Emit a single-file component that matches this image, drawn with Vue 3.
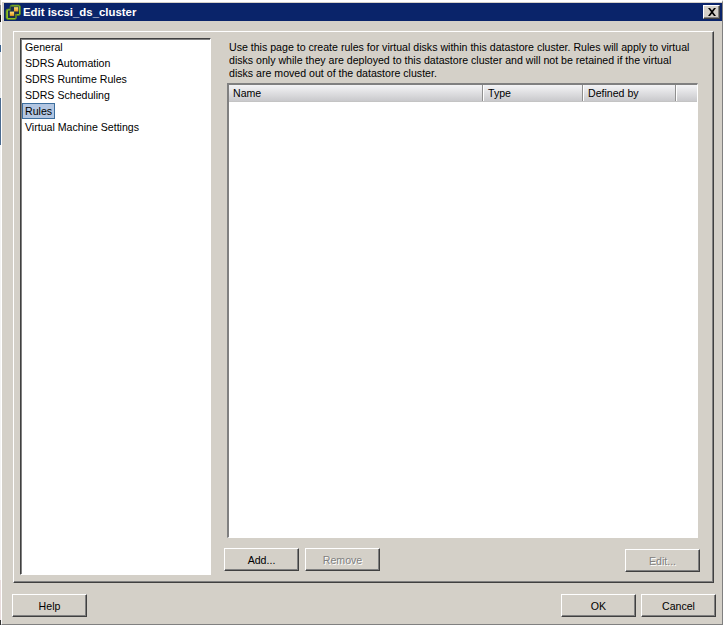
<script setup>
const items = ['General', 'SDRS Automation', 'SDRS Runtime Rules', 'SDRS Scheduling', 'Rules', 'Virtual Machine Settings']
const columns = [
  { label: 'Name', width: 254 },
  { label: 'Type', width: 100 },
  { label: 'Defined by', width: 93 },
  { label: '', width: 21 },
]
</script>

<template>
  <div class="page">
    <div class="desktop-strip"></div>
    <div class="window">
      <div class="titlebar">
        <svg class="app-icon" width="16" height="16" viewBox="0 0 16 16">
          <defs>
            <linearGradient id="amber" x1="0" y1="0" x2="0" y2="1">
              <stop offset="0" stop-color="#fbe27a"/>
              <stop offset="1" stop-color="#e8951c"/>
            </linearGradient>
          </defs>
          <rect x="5" y="1" width="10.500" height="10.500" rx="2" fill="#8cbf26" stroke="#55801c" stroke-width="0.8"/>
          <rect x="1" y="5" width="10.500" height="10.500" rx="2" fill="#8cbf26" stroke="#55801c" stroke-width="0.8"/>
          <rect x="5.500" y="2.500" width="8.500" height="7.500" fill="#1b2f4a"/>
          <rect x="3" y="6.500" width="7.500" height="7.500" fill="#1b2f4a"/>
          <rect x="9" y="3.200" width="4.300" height="4.300" fill="url(#amber)"/>
          <rect x="4.800" y="7.600" width="4.300" height="4.300" fill="url(#amber)"/>
        </svg>
        <span class="title">Edit iscsi_ds_cluster</span>
        <span class="close">
          <svg width="10" height="8" viewBox="0 0 10 8">
            <path d="M1 0h2l2 2.500L7 0h2L6 4l3 4H7L5 5.500 3 8H1l3-4z" fill="#000"/>
          </svg>
        </span>
      </div>

      <div class="panel">
        <ul class="nav">
          <li v-for="item in items" :key="item" class="nav-item">
            <span :class="['nav-label', { selected: item === 'Rules' }]">{{ item }}</span>
          </li>
        </ul>

        <div class="content">
          <p class="intro">Use this page to create rules for virtual disks within this datastore cluster. Rules will apply to virtual disks only while they are deployed to this datastore cluster and will not be retained if the virtual disks are moved out of the datastore cluster.</p>
          <div class="table">
            <div class="thead">
              <div v-for="c in columns" :key="c.width" class="th" :style="{ width: c.width + 'px' }">{{ c.label }}</div>
            </div>
          </div>
          <div class="actions">
            <button class="btn">Add...</button>
            <button class="btn" disabled>Remove</button>
            <button class="btn edit" disabled>Edit...</button>
          </div>
        </div>
      </div>

      <div class="footer">
        <button class="btn">Help</button>
        <div class="footer-right">
          <button class="btn">OK</button>
          <button class="btn">Cancel</button>
        </div>
      </div>
    </div>
  </div>
</template>

<style>
html, body { margin: 0; background: #fff; overflow: hidden; }
</style>

<style scoped>
.page {
  width: 723px;
  height: 625px;
  display: flex;
  font: 10.6px "Liberation Sans", Arial, sans-serif;
  color: #000;
}
.desktop-strip {
  width: 1px;
  background: linear-gradient(#d4d0c8 0 5px, #888 5px 15px, #111 15px 22px, #e8e8e8 22px 45px, #39608c 45px 52px, #e8e8e8 52px 98px, #4a6a8f 98px 145px, #f4f4f4 145px 580px, #e8dcdc 580px 620px, #333 620px);
}
.window {
  flex: 1;
  display: flex;
  flex-direction: column;
  box-sizing: border-box;
  border-left: 1px solid #fff;
  border-top: 2px solid #fff;
  border-right: 1px solid #808080;
  border-bottom: 1px solid #808080;
  background: #d4d0c8;
  padding: 1px 0 0 1px;
}
.titlebar {
  height: 18px;
  margin-left: 1px;
  background: #0a246a;
  display: flex;
  align-items: center;
  padding: 0 2px 0 1px;
  flex: none;
}
.app-icon { flex: none; }
.title {
  margin-left: 2px;
  color: #fff;
  font-weight: bold;
  font-size: 11.4px;
  flex: 1;
}
.close {
  width: 17px;
  height: 14px;
  box-sizing: border-box;
  background: #d4d0c8;
  border: 1px solid;
  border-color: #fff #404040 #404040 #fff;
  box-shadow: inset -1px -1px 0 #808080;
  display: flex;
  align-items: center;
  justify-content: center;
}
.panel {
  flex: none;
  width: 701px;
  height: 552px;
  margin: 10px 0 0 10px;
  box-sizing: border-box;
  border: 1px solid;
  border-color: #fff #404040 #404040 #fff;
  box-shadow: inset -1px -1px 0 #808080;
  padding: 6px 0 0 6px;
  display: flex;
}
.nav {
  list-style: none;
  margin: 0;
  padding: 0;
  width: 191px;
  height: 537px;
  box-sizing: border-box;
  border: 1px solid;
  border-color: #404040 #fff #fff #404040;
  box-shadow: inset 0 1px 0 #808080, inset 1px 0 0 #808080;
  background: #fff;
  flex: none;
}
.nav-item { height: 16px; padding-left: 1px; display: flex; }
.nav-label {
  padding: 0 2px;
  height: 16px;
  box-sizing: border-box;
  border: 1px solid transparent;
  line-height: 14px;
}
.nav-label.selected { background: #b2c6e2; border-color: #3c6e9e; }
.content {
  margin-left: 13px;
  width: 476px;
  display: flex;
  flex-direction: column;
}
.intro {
  margin: 3px 0 0 5px;
  line-height: 13px;
  height: 39px;
  width: 465px;
}
.table {
  margin: 3px 0 0 3px;
  width: 471px;
  height: 455px;
  box-sizing: border-box;
  border: 2px solid;
  border-color: #808080 #fff #fff #808080;
  border-right-width: 1px;
  border-bottom-width: 1px;
  background: #fff;
}
.thead { display: flex; height: 16px; background: linear-gradient(#f4f4f6, #c9c9cc); border-bottom: 1px solid #c4c4c4; }
.th {
  box-sizing: border-box;
  padding-left: 5px;
  line-height: 16px;
  border-right: 1px solid #8f8f8f;
  box-shadow: 1px 0 0 #fff;
}
.th:first-child { padding-left: 4px; }
.th:last-child { border-right: 0; box-shadow: none; }
.actions {
  display: flex;
  gap: 6px;
  margin-top: 10px;
}
.btn {
  width: 75px;
  height: 23px;
  box-sizing: border-box;
  padding: 0;
  background: #d4d0c8;
  border: 1px solid;
  border-color: #fff #404040 #404040 #fff;
  box-shadow: inset -1px -1px 0 #808080;
  font: inherit;
  color: #000;
}
.btn:disabled { color: #808080; text-shadow: 1px 1px 0 #fff; }
.edit { margin-left: auto; margin-top: 1px; }
.footer {
  display: flex;
  justify-content: space-between;
  margin: 11px 0 0 9px;
  width: 704px;
}
.footer-right { display: flex; gap: 5px; }
</style>
